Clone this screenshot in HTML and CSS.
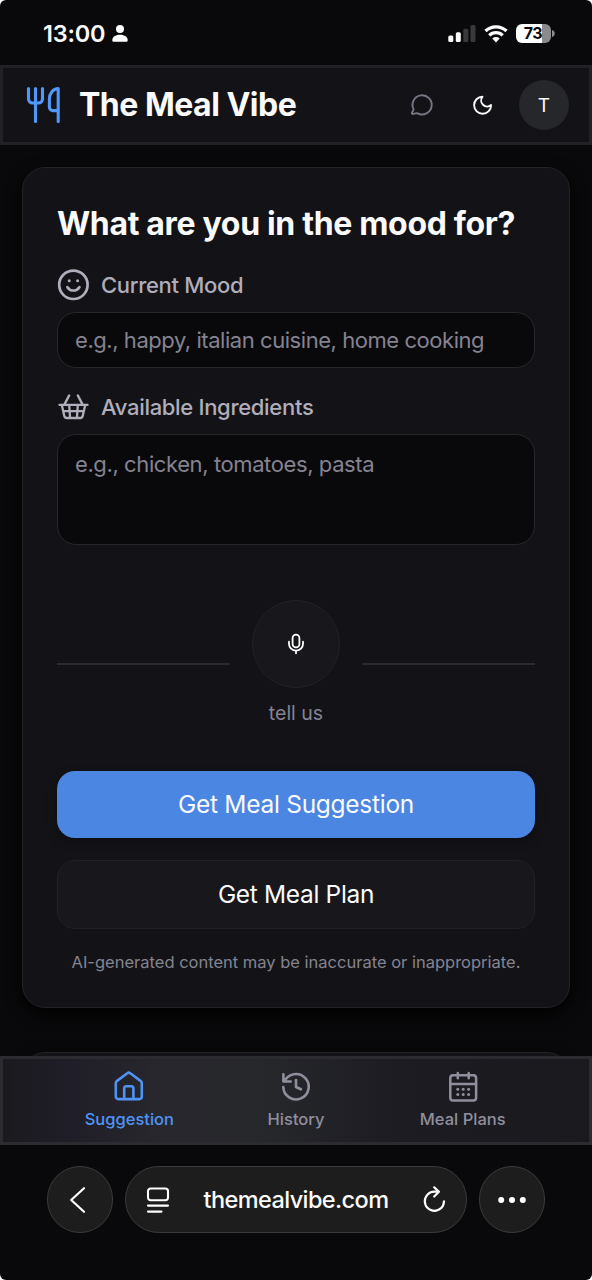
FILE: index.html
```html
<!DOCTYPE html>
<html lang="en">
<head>
<meta charset="utf-8">
<title>The Meal Vibe</title>
<link rel="stylesheet" href="styles.css">
</head>
<body>
<div class="phone">
  <div class="status">
    <div class="status-left">
      <span class="time">13:00</span>
      <svg class="person" width="16" height="17" viewBox="0 0 16 17" fill="#fff"><circle cx="8" cy="4.1" r="4"/><path d="M0.3 15.2C0.3 12 3.2 9.7 8 9.7s7.700 2.300 7.700 5.500c0 1.100-.6 1.600-1.600 1.600H1.900C.9 16.800.3 16.300.3 15.200z"/></svg>
    </div>
    <div class="status-right">
      <svg width="28" height="18" viewBox="0 0 28 18"><rect x="0.300" y="10.500" width="5" height="6.500" rx="1.500" fill="#fff"/><rect x="7.800" y="7.300" width="5" height="9.700" rx="1.500" fill="#fff"/><rect x="15.300" y="3.800" width="5" height="13.200" rx="1.500" fill="#39393b"/><rect x="22.500" y="0" width="5" height="17" rx="1.500" fill="#39393b"/></svg>
      <svg class="wifi" width="24" height="18" viewBox="0 0 24 18" fill="none" stroke="#fff" stroke-width="3.300"><path d="M1.500 6a15.200 15.200 0 0 1 21 0"/><path d="M5.300 10.400a9.700 9.700 0 0 1 13.400 0"/><path d="M8.300 13.500a5.400 5.400 0 0 1 7.400 0L12 17.400z" fill="#fff" stroke="none"/></svg>
      <div class="battery"><span>73</span></div>
      <svg class="cap" width="3" height="7" viewBox="0 0 3 7"><path d="M0 0a3.600 3.600 0 0 1 0 7z" fill="#8a8a8c"/></svg>
    </div>
  </div>

  <header class="header">
    <svg class="logo" width="36" height="38" viewBox="0 0 36 38" fill="none" stroke="#4f97fa" stroke-width="3.100" stroke-linecap="round" stroke-linejoin="round"><path d="M3.500 2.500V13a4 4 0 0 0 4 4h6a4 4 0 0 0 4-4V2.500M10.500 2.500v33M33.200 24.600V2.500c-5 0-8.800 5-8.800 10.500v8.100a3.500 3.500 0 0 0 3.500 3.500zm0 0v11"/></svg>
    <h1 class="brand">The Meal Vibe</h1>
    <div class="actions">
      <svg width="24" height="24" viewBox="0 0 24 24" fill="none" stroke="#777684" stroke-width="1.900" stroke-linecap="round" stroke-linejoin="round"><path d="M3.600 16.300a9.600 9.600 0 1 1 4.100 4.100c-1.400-.7-3.700.5-5 .6-.6 0-1-.5-.8-1.100.5-1.300 1.900-2.800 1.700-3.600z"/></svg>
      <svg width="24" height="24" viewBox="0 0 24 24" fill="none" stroke="#fafafa" stroke-width="1.900" stroke-linecap="round" stroke-linejoin="round"><path d="M11.500 3.700a6 6 0 0 0 8.600 8.300A8.500 8.500 0 1 1 11.500 3.700z"/></svg>
      <div class="avatar">T</div>
    </div>
  </header>

  <main class="main">
    <section class="card">
      <h2 class="title"><span>What are you in the mood for?</span></h2>
      <div class="label">
        <svg width="32" height="32" viewBox="0 0 32 32" fill="none" stroke="#b0aeba" stroke-width="2.700" stroke-linecap="round"><circle cx="16.400" cy="15.800" r="14.200"/><path d="M10.400 18.200c1.500 2.300 3.500 3.300 6 3.300s4.500-1 6-3.300"/><circle cx="12.200" cy="11.700" r="1.500" fill="#b0aeba" stroke="none"/><circle cx="20.600" cy="11.700" r="1.500" fill="#b0aeba" stroke="none"/></svg>
        <span class="t-mood">Current Mood</span>
      </div>
      <div class="field"><span class="t-field1">e.g., happy, italian cuisine, home cooking</span></div>
      <div class="label label-second">
        <svg width="32" height="32" viewBox="0 0 32 32" fill="none" stroke="#b0aeba" stroke-width="2.300" stroke-linecap="round" stroke-linejoin="round"><path d="M2.500 13.900h28M7.500 13.400l4.700-9M25.500 13.400l-4.700-9M4.800 14.100l2.500 10.900a2.600 2.600 0 0 0 2.500 2h13.400a2.600 2.600 0 0 0 2.500-2l2.500-10.900M6.500 20.200h20M12.200 14.100l.9 12.900M20.800 14.100l-.9 12.900"/></svg>
        <span class="t-ingr">Available Ingredients</span>
      </div>
      <div class="field area"><span class="t-field2">e.g., chicken, tomatoes, pasta</span></div>
      <div class="voice">
        <i class="rule"></i>
        <div class="voice-mid">
          <div class="mic">
            <svg width="18" height="22" viewBox="0 0 18 22" fill="none" stroke="#fff" stroke-width="1.800" stroke-linecap="round"><rect x="5.600" y="1.700" width="6.800" height="12.600" rx="3.400"/><path d="M2 8.700v2.200a7 6.700 0 0 0 14 0V8.700M9 17.700v2.600"/></svg>
          </div>
          <span class="tell">tell us</span>
        </div>
        <i class="rule"></i>
      </div>
      <div class="btn primary"><span class="t-sug">Get Meal Suggestion</span></div>
      <div class="btn secondary"><span class="t-plan">Get Meal Plan</span></div>
      <p class="note"><span>AI-generated content may be inaccurate or inappropriate.</span></p>
    </section>
    <section class="card next"></section>
  </main>

  <nav class="tabs">
    <div class="tab active">
      <svg width="32" height="32" viewBox="0 0 32 32" fill="none" stroke="currentColor" stroke-width="2.600" stroke-linejoin="round"><path d="M2.800 13.200c0-.9.400-1.600 1-2.100L14.300 3.300a2.400 2.400 0 0 1 3 0l10.500 7.800c.6.500 1 1.200 1 2.100v13.400a2.500 2.500 0 0 1-2.500 2.500h-21a2.500 2.500 0 0 1-2.500-2.500zM11.200 29V18a1.700 1.700 0 0 1 1.700-1.700h5.800a1.700 1.700 0 0 1 1.700 1.700v11"/></svg>
      <span class="t-tab1">Suggestion</span>
    </div>
    <div class="tab">
      <svg width="32" height="32" viewBox="0 0 32 32" fill="none" stroke="currentColor" stroke-width="2.600" stroke-linecap="round" stroke-linejoin="round"><path d="M3.400 4.200v7.300h7.300M4.400 11.500A12.700 12.700 0 1 1 3.300 17M16 10v7l4.900 2.300"/></svg>
      <span class="t-tab2">History</span>
    </div>
    <div class="tab">
      <svg width="32" height="32" viewBox="0 0 32 32" fill="none" stroke="currentColor" stroke-width="2.500" stroke-linecap="round"><rect x="3.300" y="5.300" width="25.800" height="25.200" rx="2.800"/><path d="M3.300 14h25.800M10.800 3v5.300M21.700 3v5.300"/><g fill="currentColor" stroke="none"><circle cx="10.800" cy="19.200" r="1.500"/><circle cx="16.200" cy="19.200" r="1.500"/><circle cx="21.600" cy="19.200" r="1.500"/><circle cx="10.800" cy="24.600" r="1.500"/><circle cx="16.200" cy="24.600" r="1.500"/><circle cx="21.600" cy="24.600" r="1.500"/></g></svg>
      <span class="t-tab3">Meal Plans</span>
    </div>
  </nav>

  <footer class="browser">
    <div class="pill round">
      <svg width="18" height="28" viewBox="0 0 18 28" fill="none" stroke="#fff" stroke-width="2.200" stroke-linecap="round" stroke-linejoin="round"><path d="M15 2.200L2.200 14 15 25.800"/></svg>
    </div>
    <div class="pill address">
      <svg width="24" height="28" viewBox="0 0 24 28" fill="none" stroke="#fff" stroke-width="2.100" stroke-linecap="round"><rect x="2" y="2.500" width="20" height="11.700" rx="2.600"/><path d="M2 19.600h20M2 25.600h13.500"/></svg>
      <span class="url">themealvibe.com</span>
      <svg width="24" height="28" viewBox="0 0 24 28" fill="none" stroke="#fff" stroke-width="2.200" stroke-linecap="round" stroke-linejoin="round"><path d="M22 15.300A9.600 9.600 0 1 1 12.400 5.700h4.500M12.200 1.300l4.700 4.500-4.700 4.700"/></svg>
    </div>
    <div class="pill round">
      <svg width="28" height="8" viewBox="0 0 28 8" fill="#fff"><circle cx="3.200" cy="4" r="3"/><circle cx="14" cy="4" r="3"/><circle cx="24.800" cy="4" r="3"/></svg>
    </div>
  </footer>
</div>
</body>
</html>
```
FILE: styles.css
```css
* { box-sizing: border-box; }
body { margin: 0; background: #fff; font-family: Inter, "Liberation Sans", sans-serif; }
svg { display: block; flex: none; }
span { white-space: nowrap; }
.phone { width: 592px; height: 1280px; border-radius: 6px; overflow: hidden; background: #09090b; display: flex; flex-direction: column; color: #fafafa; }

.status { height: 65px; flex: none; display: flex; justify-content: space-between; align-items: center; padding: 2px 38px 0 43px; }
.status-left { display: flex; align-items: center; gap: 7px; }
.time { font-size: 23.500px; font-weight: 600; letter-spacing: -0.200px; }
.status-right { display: flex; align-items: center; }
.wifi { margin: 0 8px 0 8px; }
.battery { width: 35px; height: 19px; border-radius: 6px; background: linear-gradient(90deg, #fff 26px, #8a8a8c 26px); color: #09090b; font-size: 16px; font-weight: 700; line-height: 19px; text-align: center; letter-spacing: -0.500px; }
.battery span { margin-right: 1px; }
.cap { margin-left: 1px; margin-right: -1px; }

.header { height: 80px; flex: none; background: #131317; border: 3px solid #212126; display: flex; align-items: center; padding: 0 20px 0 22px; }
.brand { margin: 0 0 0 18px; font-size: 32px; font-weight: 700; line-height: 40px; white-space: nowrap; letter-spacing: -0.500px; }
.actions { margin-left: auto; display: flex; align-items: center; gap: 37px; }
.avatar { width: 50px; height: 50px; margin-left: -13px; border-radius: 50%; background: #26272b; display: flex; align-items: center; justify-content: center; font-size: 19px; }

.main { height: 911px; flex: none; padding: 22px 22px 0; overflow: hidden; display: flex; flex-direction: column; gap: 44px; }
.card { height: 841px; flex: none; border: 1.500px solid #222227; border-radius: 23px; background: #131317; padding: 36px 34px 0; box-shadow: 0 6px 16px #000; display: flex; flex-direction: column; }
.title { margin: 0; font-size: 32px; line-height: 40px; height: 40px; font-weight: 700; letter-spacing: -0.330px; }
.label { height: 32px; margin-top: 25px; display: flex; align-items: center; gap: 12px; color: #b0aeba; font-size: 22px; line-height: 30px; font-weight: 450; }
.t-mood { letter-spacing: -0.320px; }
.t-ingr { letter-spacing: -0.310px; }
.field { height: 56px; margin-top: 11px; border: 1.500px solid #27272c; border-radius: 19px; background: #09090b; padding: 0 17px; line-height: 55px; font-size: 22px; color: #858391; }
.t-field1 { letter-spacing: -0.450px; }
.t-field2 { letter-spacing: -0.400px; }
.label-second { margin-top: 23px; }
.area { height: 111px; line-height: 58px; }
.voice { height: 126px; margin-top: 55px; display: flex; align-items: center; gap: 22px; }
.rule { flex: 1; height: 2px; background: #2b2b31; margin-top: 1px; }
.voice-mid { width: 88px; height: 126px; flex: none; display: flex; flex-direction: column; align-items: center; }
.mic { width: 88px; height: 88px; flex: none; border-radius: 50%; background: #18181c; border: 1px solid #222226; display: flex; align-items: center; justify-content: center; }
.tell { margin-top: 13px; font-size: 19.500px; line-height: 25px; color: #858391; }
.btn { border-radius: 18px; display: flex; align-items: center; justify-content: center; font-size: 24.500px; padding-bottom: 2px; }
.t-sug { letter-spacing: -0.270px; }
.t-plan { letter-spacing: -0.330px; }
.primary { height: 67px; margin-top: 45px; background: #4a86e2; box-shadow: 0 4px 10px #0f0f12; }
.secondary { height: 69px; margin-top: 22px; background: #18181c; border: 1px solid #222226; }
.note { margin: 21px 0 0; font-size: 16.500px; line-height: 24px; color: #858391; text-align: center; }

.tabs { height: 89px; flex: none; border: 3px solid #2b2b31; background: linear-gradient(90deg, #1a1a1e 0%, #1f1d27 10%, #27272d 27%, #27282c 43%, #1c1c22 67%, #19191e 100%); display: flex; padding: 11px 43px 0; }
.tab { flex: 1; display: flex; flex-direction: column; align-items: center; gap: 5px; color: #918f9e; font-size: 16.500px; line-height: 24px; font-weight: 500; }
.active { color: #4f94f5; }

.browser { flex: 1; display: flex; justify-content: center; padding-top: 21px; gap: 12px; }
.pill { height: 67px; background: #1d1d1e; border: 1px solid #3b3b3d; border-radius: 34px; display: flex; align-items: center; justify-content: center; flex: none; }
.round { width: 66px; }
.round:first-child svg { margin-right: 4px; }
.address { width: 342px; justify-content: space-between; padding: 0 20px; }
.url { font-size: 23.500px; font-weight: 500; letter-spacing: -0.600px; }
```
